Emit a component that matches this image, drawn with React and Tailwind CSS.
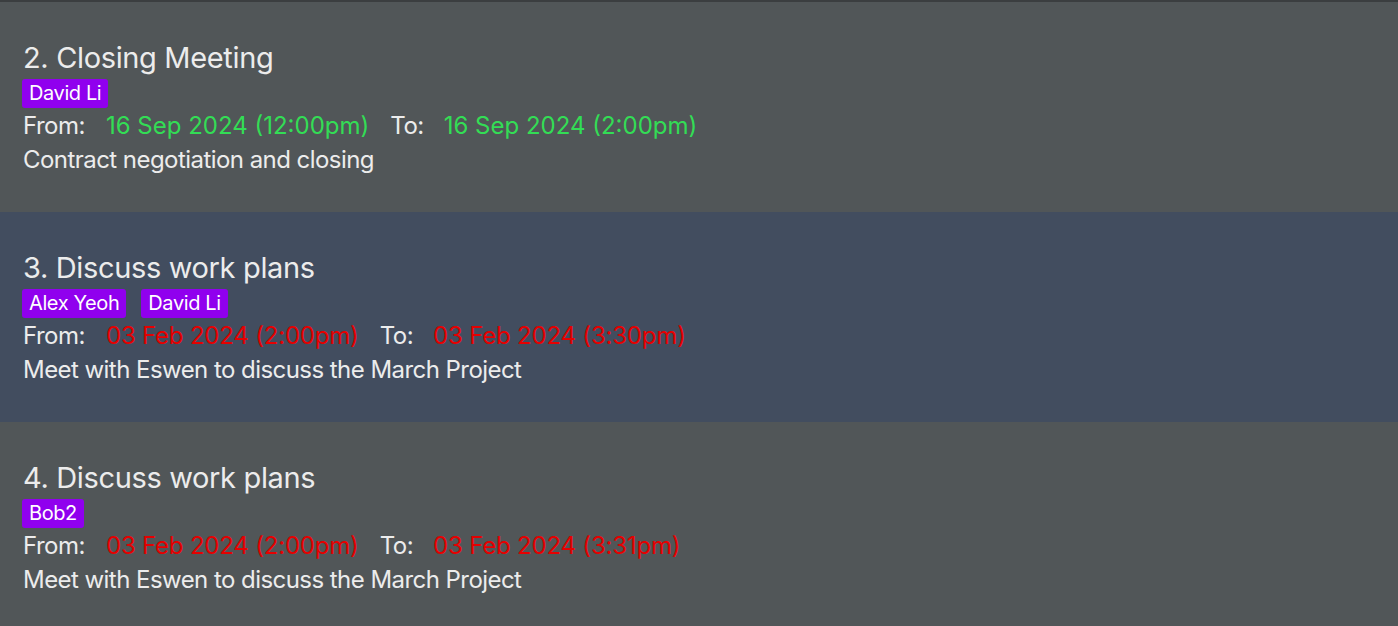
const meetings = [
  {
    id: 2,
    title: "Closing Meeting",
    tags: ["David Li"],
    from: "16 Sep 2024 (12:00pm)",
    to: "16 Sep 2024 (2:00pm)",
    desc: "Contract negotiation and closing",
    upcoming: true,
    selected: false,
  },
  {
    id: 3,
    title: "Discuss work plans",
    tags: ["Alex Yeoh", "David Li"],
    from: "03 Feb 2024 (2:00pm)",
    to: "03 Feb 2024 (3:30pm)",
    desc: "Meet with Eswen to discuss the March Project",
    upcoming: false,
    selected: true,
  },
  {
    id: 4,
    title: "Discuss work plans",
    tags: ["Bob2"],
    from: "03 Feb 2024 (2:00pm)",
    to: "03 Feb 2024 (3:31pm)",
    desc: "Meet with Eswen to discuss the March Project",
    upcoming: false,
    selected: false,
  },
];

const MeetingCard = ({ m }) => {
  const dateColor = m.upcoming
    ? "text-[#33dd55]"
    : "text-[#e60000] tracking-[-0.2px]";
  return (
    <div
      className={`h-[210px] shrink-0 px-[23px] pt-[38px] text-[#ececec] ${
        m.selected ? "bg-[#424d5f]" : "bg-[#515658]"
      }`}
    >
      {/* Title */}
      <div className="text-[29px] leading-[36px] tracking-[-0.35px]">
        {m.id}. {m.title}
      </div>

      {/* Tags */}
      <div className="flex gap-[15px] mt-[3px] -ml-px">
        {m.tags.map((t) => (
          <span
            key={t}
            className="h-[29px] px-[7px] rounded-[3px] bg-[#9000ee] text-white text-[20px] leading-[29px] tracking-[-0.4px]"
          >
            {t}
          </span>
        ))}
      </div>

      {/* Dates */}
      <div className="flex text-[24px] leading-[34px] mt-px">
        <span className="mr-[21px] tracking-[-0.5px]">From:</span>
        <span className={`${dateColor} mr-[21px]`}>{m.from}</span>
        <span className="mr-[20px] tracking-[-0.5px]">To:</span>
        <span className={dateColor}>{m.to}</span>
      </div>

      {/* Description */}
      <div className="text-[24px] leading-[34px] tracking-[-0.55px]">{m.desc}</div>
    </div>
  );
};

export default function App() {
  return (
    <div
      className="h-[626px] w-full overflow-hidden bg-[#515658] border-t-2 border-[#3b3e40] flex flex-col"
      style={{ fontFamily: "Inter, 'Noto Sans', sans-serif" }}
    >
      {meetings.map((m) => (
        <MeetingCard key={m.id} m={m} />
      ))}
    </div>
  );
}
